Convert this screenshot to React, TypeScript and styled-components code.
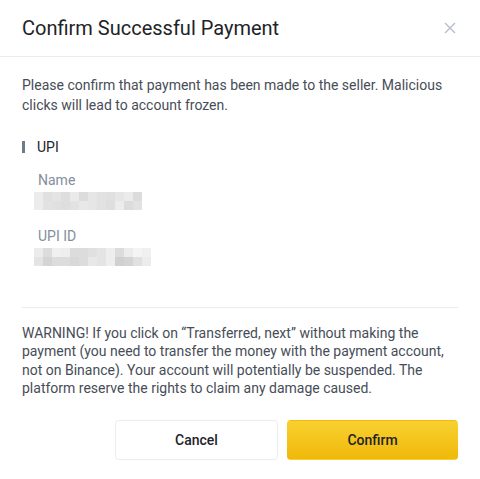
import React from 'react';
import styled, { createGlobalStyle } from 'styled-components';

const GlobalStyle = createGlobalStyle`
	html, body {
		margin: 0;
		padding: 0;
		background: #ffffff;
	}
	body {
		font-family: Roboto, 'Liberation Sans', sans-serif;
		color: #474d57;
	}
	* {
		box-sizing: border-box;
	}
`;

const Modal = styled.div`
	width: 480px;
	min-height: 479px;
	background: #ffffff;
	display: flex;
	flex-direction: column;
`;

const Header = styled.div`
	flex-shrink: 0;
	height: 57px;
	padding: 0 18px 0 22px;
	display: flex;
	align-items: center;
	justify-content: space-between;
	border-bottom: 1px solid #eaecef;
`;

const Title = styled.h2`
	margin: 0;
	font-size: 20px;
	font-weight: 400;
	color: #1e2329;
`;

const CloseButton = styled.button`
	width: 24px;
	height: 24px;
	border: none;
	background: none;
	padding: 0;
	display: grid;
	place-content: center;
	cursor: pointer;
	color: #b7bdc6;
`;

const Body = styled.div`
	padding: 18px 22px 0;
	display: flex;
	flex-direction: column;
`;

const Text = styled.p<{ $lh: number }>`
	margin: 0;
	font-size: 14px;
	line-height: ${(p) => p.$lh}px;
	color: #474d57;
`;

const MethodTitle = styled.div`
	margin-top: 22px;
	display: flex;
	align-items: center;
	gap: 12px;
	font-size: 14px;
	line-height: 20px;
	color: #1e2329;
	&::before {
		content: '';
		width: 3px;
		height: 12px;
		background: #707a8a;
	}
`;

const Fields = styled.div`
	padding-left: 12px;
	margin-top: 13px;
	display: flex;
	flex-direction: column;
	gap: 16px;
`;

const Field = styled.div`
	display: flex;
	flex-direction: column;
	gap: 2px;
`;

const Label = styled.span`
	padding-left: 4px;
	font-size: 14px;
	line-height: 20px;
	color: #848e9c;
`;

const Mosaic = styled.div<{ $cols: number }>`
	display: grid;
	grid-template-columns: repeat(${(p) => p.$cols}, 9px);
	grid-auto-rows: 9px;
`;

const Cell = styled.span<{ $c: string }>`
	background: ${(p) => p.$c};
`;

const Divider = styled.hr`
	margin: 41px 0 0;
	border: none;
	border-top: 1px solid #eaecef;
`;

const Warning = styled(Text)`
	margin-top: 16px;
`;

const Actions = styled.div`
	margin-top: 23px;
	display: flex;
	justify-content: flex-end;
	gap: 9px;
`;

const Button = styled.button<{ $primary?: boolean; $w: number }>`
	width: ${(p) => p.$w}px;
	height: 40px;
	border-radius: 4px;
	font-family: inherit;
	font-size: 14px;
	font-weight: 500;
	color: #1e2329;
	cursor: pointer;
	border: 1px solid ${(p) => (p.$primary ? 'transparent' : '#eaecef')};
	background: ${(p) => (p.$primary ? 'linear-gradient(180deg, #f8d12f 0%, #f0b90b 100%)' : '#ffffff')};
`;

const nameCells = [
	'#ececec', '#e0e0e0', '#e4e4e4', '#dedede', '#eaeaea', '#dcdcdc', '#e6e6e6', '#e2e2e2', '#e0e0e0', '#e6e6e6', '#ebebeb', '#dcdcdc',
	'#ececec', '#e2e2e2', '#e0e0e0', '#dedede', '#e2e2e2', '#e8e8e8', '#e6e6e6', '#e2e2e2', '#dedede', '#ececec', '#dcdcdc', '#e2e2e2',
];

const idCells = [
	'#ececec', '#dcdcdc', '#f0f0f0', '#eeeeee', '#dcdcdc', '#dcdcdc', '#e0e0e0', '#e4e4e4', '#eeeeee', '#dcdcdc', '#ececec', '#f4f4f4', '#f0f0f0',
	'#e4e4e4', '#d4d4d4', '#dcdcdc', '#dcdcdc', '#d8d8d8', '#dcdcdc', '#e8e8e8', '#e4e4e4', '#eeeeee', '#d0d0d0', '#d4d4d4', '#e0e0e0', '#ececec',
];

const Blurred = ({ cells, cols }: { cells: string[]; cols: number }) => (
	<Mosaic $cols={cols}>
		{cells.map((c, i) => (
			<Cell key={i} $c={c} />
		))}
	</Mosaic>
);

export default function App() {
	return (
		<>
			<GlobalStyle />
			<Modal>
				<Header>
					<Title>Confirm Successful Payment</Title>
					<CloseButton aria-label="close">
						<svg width="12" height="12" viewBox="0 0 12 12" fill="none">
							<path d="M1 1L11 11M11 1L1 11" stroke="currentColor" strokeWidth="1.4" />
						</svg>
					</CloseButton>
				</Header>
				<Body>
					<Text $lh={20}>
						Please confirm that payment has been made to the seller. Malicious clicks will lead to account frozen.
					</Text>
					<MethodTitle>UPI</MethodTitle>
					<Fields>
						<Field>
							<Label>Name</Label>
							<Blurred cells={nameCells} cols={12} />
						</Field>
						<Field>
							<Label>UPI ID</Label>
							<Blurred cells={idCells} cols={13} />
						</Field>
					</Fields>
					<Divider />
					<Warning $lh={18.3}>
						WARNING! If you click on “Transferred, next” without making the payment (you need to transfer the money with the
						payment account, not on Binance). Your account will potentially be suspended. The platform reserve the rights to
						claim any damage caused.
					</Warning>
					<Actions>
						<Button $w={163}>Cancel</Button>
						<Button $primary $w={171}>
							Confirm
						</Button>
					</Actions>
				</Body>
			</Modal>
		</>
	);
}
